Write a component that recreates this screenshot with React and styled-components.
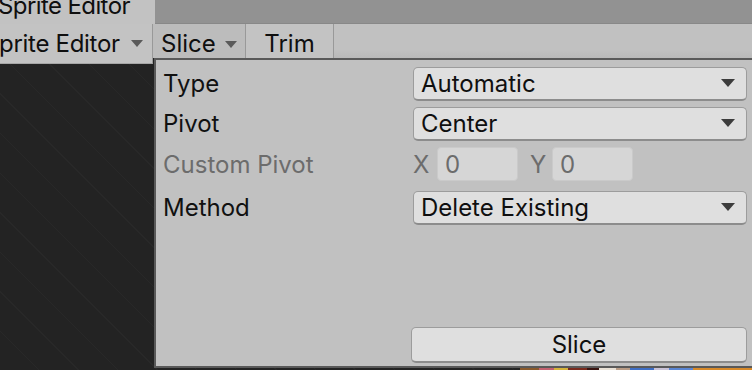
import React from 'react'
import styled, { createGlobalStyle } from 'styled-components'

const GlobalStyle = createGlobalStyle`
  html, body {
    margin: 0;
    padding: 0;
    background: #232323;
  }
  body {
    font-family: Inter, "Noto Sans", "Liberation Sans", sans-serif;
    font-size: 24px;
    color: #0f0f0f;
  }
`

const Window = styled.div`
  position: relative;
  width: 752px;
  height: 370px;
  overflow: hidden;
  display: flex;
  flex-direction: column;
  background: #232323;
`

const TabStrip = styled.div`
  height: 23px;
  flex: none;
  display: flex;
  background: #929292;
  border-bottom: 1px solid #888888;
`

const Tab = styled.div`
  width: 155px;
  height: 24px;
  background: #c2c2c2;
  line-height: 16px;
  white-space: nowrap;
  overflow: hidden;
  z-index: 1;
`

const TabTitle = styled.span`
  display: block;
  margin-left: -2px;
  margin-top: -2px;
  letter-spacing: -0.6px;
`

const Toolbar = styled.div`
  height: 34px;
  flex: none;
  display: flex;
  align-items: flex-start;
  background: linear-gradient(#c1c1c1 0%, #c1c1c1 75%, #b9b9b9 100%);
  position: relative;
  z-index: 2;
`

const ToolButton = styled.div`
  height: ${p => p.$tall ? 40 : 34}px;
  width: ${p => p.$width}px;
  margin-left: ${p => p.$shift || 0}px;
  box-sizing: border-box;
  display: flex;
  align-items: center;
  justify-content: ${p => p.$center ? 'center' : 'flex-start'};
  padding-left: ${p => p.$pad || 0}px;
  padding-top: 5px;
  padding-bottom: ${p => p.$tall ? 6 : 0}px;
  gap: ${p => p.$tall ? 11 : 9}px;
  background: ${p => p.$active ? '#bcbcbc' : '#c3c3c3'};
  border-right: 1px solid #999999;
  border-bottom: ${p => p.$tall ? '1px solid #a6a6a6' : 'none'};
  white-space: nowrap;
  letter-spacing: ${p => p.$tall ? '-0.3px' : 'normal'};
`

const SmallArrow = styled.span`
  width: 0;
  height: 0;
  border-left: 6px solid transparent;
  border-right: 6px solid transparent;
  border-top: 7px solid #5a5a5a;
  margin-top: 1px;
`

const Canvas = styled.div`
  flex: 1;
  position: relative;
  background-color: #232323;
  background-image: repeating-linear-gradient(
    45deg,
    transparent 0px,
    transparent 27px,
    #282828 27px,
    #282828 28px
  );
`

const SpriteStrip = styled.div`
  position: absolute;
  left: 520px;
  top: 308px;
  width: 240px;
  height: 10px;
  background: linear-gradient(90deg,
    #8a5a2c 0 8%, #c4626f 8% 14%, #d7b33a 14% 20%, #7a2b1e 20% 28%,
    #3a1410 28% 33%, #e9e1d6 33% 40%, #b99c86 40% 46%, #3f6fc6 46% 56%,
    #c9c3d8 56% 62%, #5a86d4 62% 72%, #d88a2a 72% 100%);
`

const Popup = styled.div`
  position: absolute;
  left: 154px;
  top: 58px;
  width: 600px;
  height: 310px;
  box-sizing: border-box;
  border: 2px solid #595959;
  background: #c1c1c1;
  padding: 6px 7px 3px 7px;
  display: flex;
  flex-direction: column;
  z-index: 3;
`

const Row = styled.div`
  display: grid;
  grid-template-columns: 250px 334px;
  align-items: center;
  height: 34px;
  margin-top: ${p => p.$gap || 0}px;
`

const Label = styled.span`
  color: ${p => p.$disabled ? '#6c6c6c' : '#111111'};
  line-height: 34px;
  margin-top: ${p => p.$disabled ? 2 : 1}px;
`

const Dropdown = styled.div`
  height: 34px;
  box-sizing: border-box;
  display: flex;
  align-items: center;
  justify-content: space-between;
  padding: 0 11px 0 7px;
  background: #dfdfdf;
  border: 1px solid #9c9c9c;
  border-bottom: 2px solid #8c8c8c;
  border-radius: 5px;
`

const DropArrow = styled.span`
  width: 0;
  height: 0;
  border-left: 7px solid transparent;
  border-right: 7px solid transparent;
  border-top: 8px solid #3c3c3c;
`

const VectorFields = styled.div`
  display: flex;
  gap: 12px;
`

const Axis = styled.div`
  display: flex;
  align-items: center;
  width: ${p => p.$width}px;
`

const AxisName = styled.span`
  width: ${p => p.$width}px;
  color: #6c6c6c;
`

const NumberField = styled.div`
  flex: 1;
  height: 34px;
  box-sizing: border-box;
  display: flex;
  align-items: center;
  padding-left: 7px;
  background: #d6d6d6;
  border: 1px solid #cacaca;
  border-radius: 4px;
  color: #6c6c6c;
`

const Footer = styled.div`
  margin-top: auto;
  display: grid;
  grid-template-columns: 248px 336px;
`

const SliceButton = styled.div`
  grid-column: 2;
  height: 36px;
  box-sizing: border-box;
  display: flex;
  align-items: center;
  justify-content: center;
  background: #dfdfdf;
  border: 1px solid #9c9c9c;
  border-bottom: 2px solid #8c8c8c;
  border-radius: 5px;
`

export default function App() {
  return (
    <Window>
      <GlobalStyle />
      <TabStrip>
        <Tab>
          <TabTitle>Sprite Editor</TabTitle>
        </Tab>
      </TabStrip>
      <Toolbar>
        <ToolButton $tall $width={169} $shift={-16}>
          Sprite Editor <SmallArrow />
        </ToolButton>
        <ToolButton $active $width={93} $pad={8}>
          Slice <SmallArrow />
        </ToolButton>
        <ToolButton $width={88} $center>
          Trim
        </ToolButton>
      </Toolbar>
      <Canvas>
        <SpriteStrip />
      </Canvas>
      <Popup>
        <Row>
          <Label>Type</Label>
          <Dropdown>Automatic<DropArrow /></Dropdown>
        </Row>
        <Row $gap={6}>
          <Label>Pivot</Label>
          <Dropdown>Center<DropArrow /></Dropdown>
        </Row>
        <Row $gap={6}>
          <Label $disabled>Custom Pivot</Label>
          <VectorFields>
            <Axis $width={105}>
              <AxisName $width={24}>X</AxisName>
              <NumberField>0</NumberField>
            </Axis>
            <Axis $width={103}>
              <AxisName $width={22}>Y</AxisName>
              <NumberField>0</NumberField>
            </Axis>
          </VectorFields>
        </Row>
        <Row $gap={10}>
          <Label>Method</Label>
          <Dropdown>Delete Existing<DropArrow /></Dropdown>
        </Row>
        <Footer>
          <SliceButton>Slice</SliceButton>
        </Footer>
      </Popup>
    </Window>
  )
}
